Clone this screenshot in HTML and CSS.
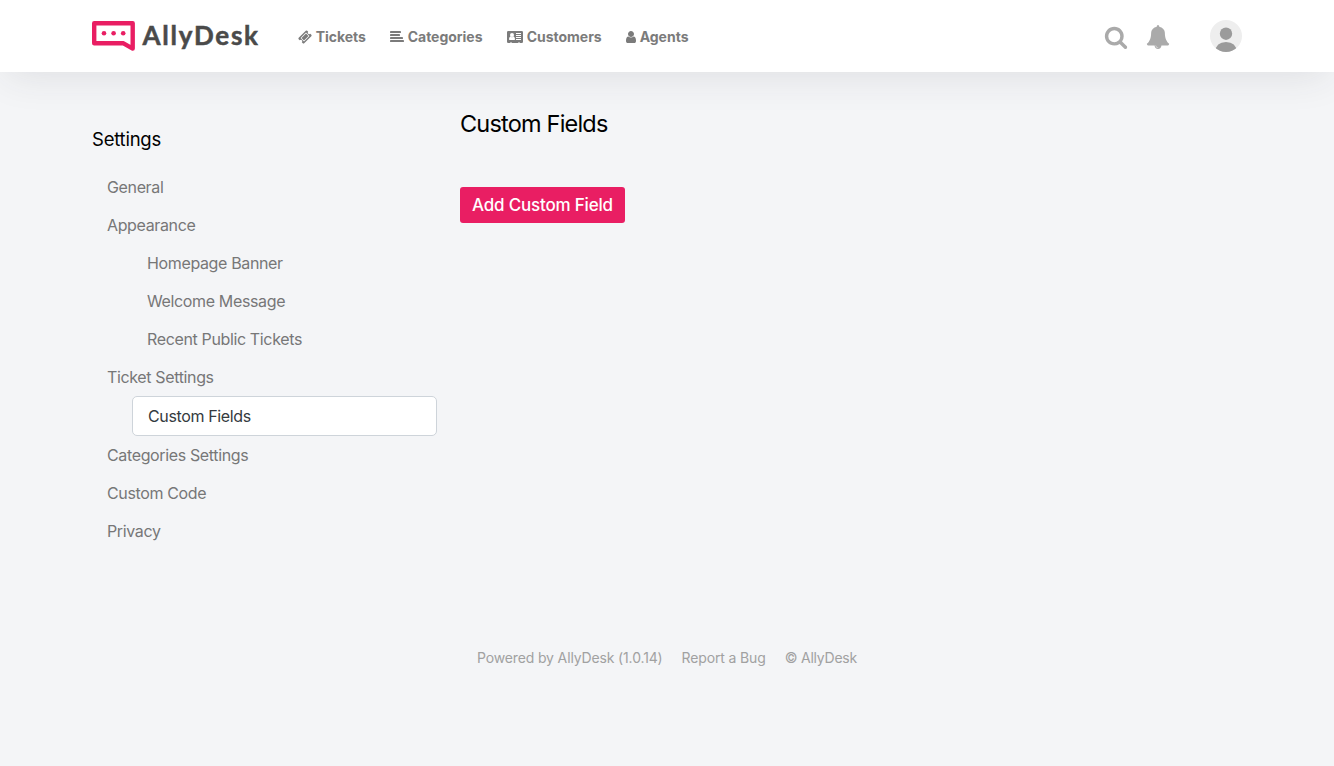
FILE: index.html
```html
<!DOCTYPE html>
<html lang="en">
<head>
<meta charset="utf-8">
<title>Custom Fields - AllyDesk</title>
<link rel="stylesheet" href="styles.css">
</head>
<body>
<header class="topbar">
  <div class="container topbar-inner">
    <a class="logo">
      <svg class="logo-mark" width="44" height="32" viewBox="0 0 44 32"><path d="M2.200 3.200H40.700V28.600L31.500 23.300H2.200Z" fill="none" stroke="#e91e63" stroke-width="4.400" stroke-linejoin="round"/><g fill="#e91e63"><circle cx="12" cy="13.200" r="2.300"/><circle cx="21.600" cy="13.200" r="2.300"/><circle cx="31.200" cy="13.200" r="2.300"/></g></svg>
      <span class="logo-text">AllyDesk</span>
    </a>
    <nav class="nav">
      <a class="nav-item tickets"><svg width="14" height="14" viewBox="0 0 1792 1792"><path d="M1024 452l316 316-572 572-316-316zm-211 979l618-618q19-19 19-45t-19-45l-362-362q-18-18-45-18t-45 18l-618 618q-19 19-19 45t19 45l362 362q18 18 45 18t45-18zm889-637l-907 908q-37 37-90.5 37t-90.5-37l-126-125q56-56 56-136t-56-136-136-56-136 56l-125-126q-37-37-37-90.5t37-90.5l907-906q37-37 90.5-37t90.5 37l125 125q-56 56-56 136t56 136 136 56 136-56l126 125q37 37 37 90.5t-37 90.5z"/></svg><span>Tickets</span></a>
      <a class="nav-item categories"><svg width="14" height="14" viewBox="0 0 14 14"><rect y="1" width="11" height="2" rx=".4"/><rect y="4" width="10" height="2" rx=".4"/><rect y="7" width="13" height="2" rx=".4"/><rect y="10" width="14" height="2" rx=".4"/></svg><span>Categories</span></a>
      <a class="nav-item customers"><svg width="16" height="14" viewBox="0 0 16 14"><path fill-rule="evenodd" d="M1.200 1H14.800Q16 1 16 2.200V11.800Q16 13 14.800 13H13V12.400H11V13H5V12.400H3V13H1.200Q0 13 0 11.800V2.200Q0 1 1.200 1ZM2 9.300Q2 10 2.700 10H7.300Q8 10 8 9.300Q8 7 6.600 6.600Q5 7.700 3.400 6.600Q2 7 2 9.300ZM5 3A2 2 0 1 0 5 7A2 2 0 1 0 5 3ZM9 3V4H14V3ZM9 5V6H14V5ZM9 7V8H14V7ZM9 9V10H14V9Z"/></svg><span>Customers</span></a>
      <a class="nav-item agents"><svg width="10" height="14" viewBox="256 0 1280 1792"><path d="M1536 1399q0 109-62.500 187t-150.500 78h-854q-88 0-150.500-78t-62.500-187q0-85 8.500-160.500t31.500-152 58.500-131 94-89 134.500-34.500q131 128 313 128t313-128q76 0 134.500 34.500t94 89 58.500 131 31.500 152 8.500 160.500zm-256-887q0 159-112.500 271.500t-271.500 112.500-271.500-112.500-112.500-271.500 112.500-271.500 271.500-112.500 271.500 112.500 112.500 271.500z"/></svg><span>Agents</span></a>
    </nav>
    <div class="tools">
      <svg class="glyph" width="24" height="24" viewBox="0 0 1792 1792"><path d="M1216 832q0-185-131.500-316.500t-316.500-131.500-316.500 131.500-131.500 316.500 131.500 316.500 316.500 131.500 316.500-131.500 131.500-316.500zm512 832q0 52-38 90t-90 38q-54 0-90-38l-343-342q-179 124-399 124-143 0-273.500-55.500t-225-150-150-225-55.500-273.500 55.500-273.500 150-225 225-150 273.500-55.500 273.500 55.500 225 150 150 225 55.500 273.500q0 220-124 399l343 343q37 37 37 90z"/></svg>
      <svg class="glyph bell" width="24" height="24" viewBox="0 0 1792 1792"><path d="M912 1696q0-16-16-16-59 0-101.500-42.500t-42.500-101.500q0-16-16-16t-16 16q0 73 51.500 124.500t124.500 51.500q16 0 16-16zm816-288q0 52-38 90t-90 38h-448q0 106-75 181t-181 75-181-75-75-181h-448q-52 0-90-38t-38-90q50-42 91-88t85-119.500 74.500-158.500 50-206 19.500-260q0-152 117-282.500t307-158.500q-8-19-8-39 0-40 28-68t68-28 68 28 28 68q0 20-8 39 190 28 307 158.500t117 282.500q0 139 19.500 260t50 206 74.500 158.500 85 119.500 91 88z"/></svg>
      <svg class="avatar" width="32" height="32" viewBox="0 0 32 32"><clipPath id="round"><circle cx="16" cy="16" r="16"/></clipPath><g clip-path="url(#round)"><rect width="32" height="32" fill="#eee"/><circle cx="16" cy="13.700" r="6.200" fill="#9b9b9b"/><path d="M5 32Q6 22 16 22T27 32Z" fill="#9b9b9b"/></g></svg>
    </div>
  </div>
</header>
<main class="container layout">
  <aside class="sidebar">
    <h2 class="side-title">Settings</h2>
    <nav class="menu">
      <a>General</a>
      <a>Appearance</a>
      <a class="sub">Homepage Banner</a>
      <a class="sub">Welcome Message</a>
      <a class="sub">Recent Public Tickets</a>
      <a>Ticket Settings</a>
      <a class="sub active">Custom Fields</a>
      <a>Categories Settings</a>
      <a>Custom Code</a>
      <a>Privacy</a>
    </nav>
  </aside>
  <section class="content">
    <h1 class="title">Custom Fields</h1>
    <button class="add">Add Custom Field</button>
  </section>
</main>
<footer class="footer"><span class="powered">Powered by AllyDesk (1.0.14)</span><span class="report">Report a Bug</span><span class="copy">© AllyDesk</span></footer>
</body>
</html>
```
FILE: styles.css
```css
* { box-sizing: border-box; }
body {
  margin: 0;
  min-height: 766px;
  background: #f4f5f7;
  color: #000;
  font-family: Inter, "Liberation Sans", sans-serif;
  font-size: 16px;
  overflow: hidden;
}
.container { width: 1150px; margin: 0 auto; }
.topbar {
  height: 72px;
  background: #fff;
  box-shadow: 0 8px 40px -6px rgba(50, 50, 60, .12);
}
.topbar-inner { display: flex; height: 72px; align-items: center; }
.logo { display: flex; align-items: center; width: 206px; }
.logo-mark { flex: none; margin-right: 6.500px; }
.logo-text {
  color: #4a4a4a;
  font: 700 26px/32px Lato, sans-serif;
  letter-spacing: 1.750px;
  -webkit-text-stroke: .5px #4a4a4a;
  white-space: nowrap;
  padding-bottom: 3px;
}
.nav { display: flex; padding-top: 2px; color: #7b7b7b; font-size: 14px; font-weight: 700; line-height: 20px; letter-spacing: -.02px; }
.nav-item { display: flex; align-items: center; gap: 3.700px; white-space: nowrap; }
.nav svg, .tools svg { fill: currentColor; flex: none; }
.tickets { width: 92px; }
.categories { width: 117px; }
.customers { width: 119px; }
.tools { display: flex; align-items: center; margin-left: auto; color: #aaa; }
.glyph { margin-top: 1px; }
.bell { margin: 1px 40px 0 18.500px; }
.layout { display: flex; height: 567px; }
.sidebar { width: 345px; padding-top: 53px; }
.side-title { margin: 0 0 15px; font-size: 18.500px; line-height: 28px; font-weight: 400; letter-spacing: -.23px; }
.menu { display: flex; flex-direction: column; letter-spacing: -.36px; }
.menu a { height: 38px; padding-left: 15px; line-height: 38px; color: #777; }
.menu .sub { padding-left: 55px; }
.menu .active {
  height: 40px;
  margin-left: 40px;
  padding-left: 15px;
  border: 1px solid #ced4da;
  border-radius: 5px;
  background: #fff;
  color: #343a40;
}
.content { padding: 34px 0 0 23px; }
.title { margin: 0 0 45px; font-size: 23.500px; line-height: 36px; font-weight: 400; letter-spacing: -.8px; }
.add {
  display: block;
  width: 165px;
  height: 36px;
  padding: 0;
  border: 0;
  border-radius: 3px;
  background: #e91e63;
  color: #fff;
  font: 500 17px/36px Inter, sans-serif;
  letter-spacing: -.19px;
  white-space: nowrap;
}
.footer {
  display: flex;
  justify-content: center;
  gap: 19px;
  padding-top: 9px;
  color: #a1a1a1;
  font-size: 14px;
  line-height: 20px;
  letter-spacing: -.14px;
}
.copy { letter-spacing: -.22px; }
```
